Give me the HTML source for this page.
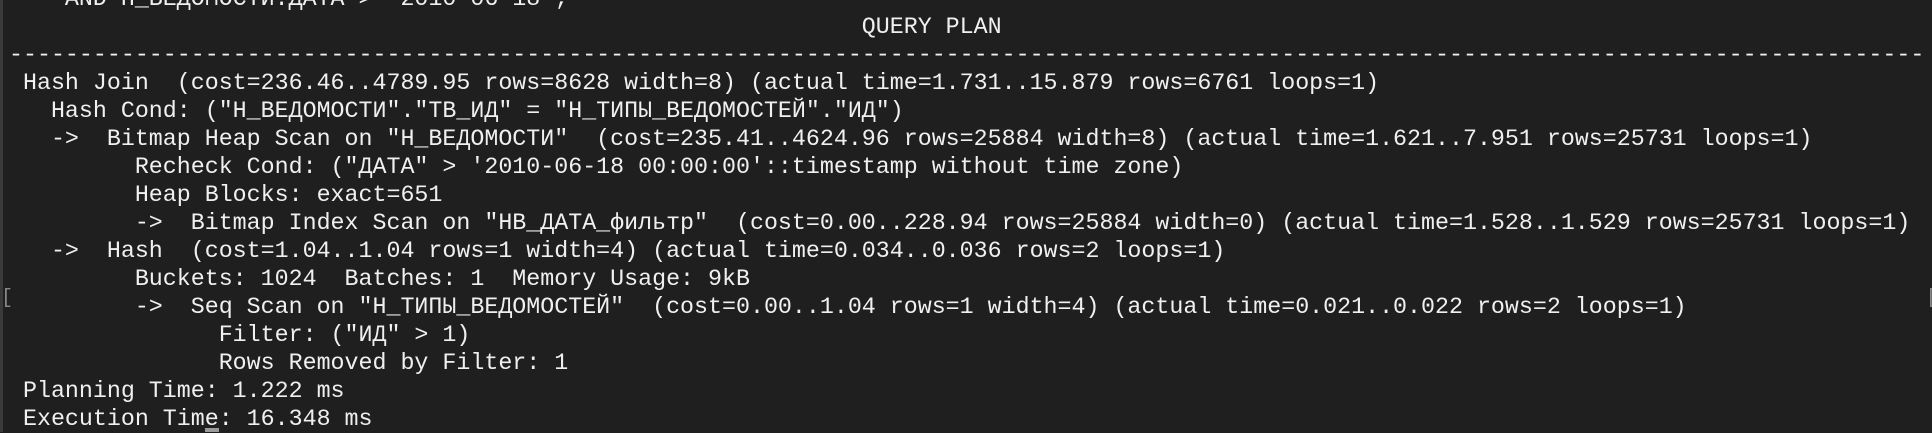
<!DOCTYPE html>
<html><head><meta charset="utf-8"><style>
html,body{margin:0;padding:0;width:1932px;height:432px;overflow:hidden;background:#1f1f1f;}
.bar{position:absolute;left:0;top:0;width:3px;height:432px;background:#3a3a3a;}
pre{position:absolute;left:9px;top:-15px;margin:0;font-family:"Liberation Mono","DejaVu Sans Mono",monospace;font-size:23.3px;line-height:28px;color:#f0f0f0;white-space:pre;}
.br{position:absolute;color:#888;font-family:"Liberation Mono",monospace;font-size:20px;}
.cur{position:absolute;left:205px;top:428px;width:14px;height:4px;background:#9a9a9a;}
</style></head><body>
<div class="bar"></div>
<pre>    AND Н_ВЕДОМОСТИ.ДАТА &gt; '2010-06-18';
                                                             QUERY PLAN
-----------------------------------------------------------------------------------------------------------------------------------------
 Hash Join  (cost=236.46..4789.95 rows=8628 width=8) (actual time=1.731..15.879 rows=6761 loops=1)
   Hash Cond: ("Н_ВЕДОМОСТИ"."ТВ_ИД" = "Н_ТИПЫ_ВЕДОМОСТЕЙ"."ИД")
   -&gt;  Bitmap Heap Scan on "Н_ВЕДОМОСТИ"  (cost=235.41..4624.96 rows=25884 width=8) (actual time=1.621..7.951 rows=25731 loops=1)
         Recheck Cond: ("ДАТА" &gt; '2010-06-18 00:00:00'::timestamp without time zone)
         Heap Blocks: exact=651
         -&gt;  Bitmap Index Scan on "НВ_ДАТА_фильтр"  (cost=0.00..228.94 rows=25884 width=0) (actual time=1.528..1.529 rows=25731 loops=1)
   -&gt;  Hash  (cost=1.04..1.04 rows=1 width=4) (actual time=0.034..0.036 rows=2 loops=1)
         Buckets: 1024  Batches: 1  Memory Usage: 9kB
         -&gt;  Seq Scan on "Н_ТИПЫ_ВЕДОМОСТЕЙ"  (cost=0.00..1.04 rows=1 width=4) (actual time=0.021..0.022 rows=2 loops=1)
               Filter: ("ИД" &gt; 1)
               Rows Removed by Filter: 1
 Planning Time: 1.222 ms
 Execution Time: 16.348 ms</pre>
<div class="br" style="left:1px;top:287px">[</div>
<div class="br" style="left:1926px;top:287px">[</div>
<div class="cur"></div>
</body></html>
